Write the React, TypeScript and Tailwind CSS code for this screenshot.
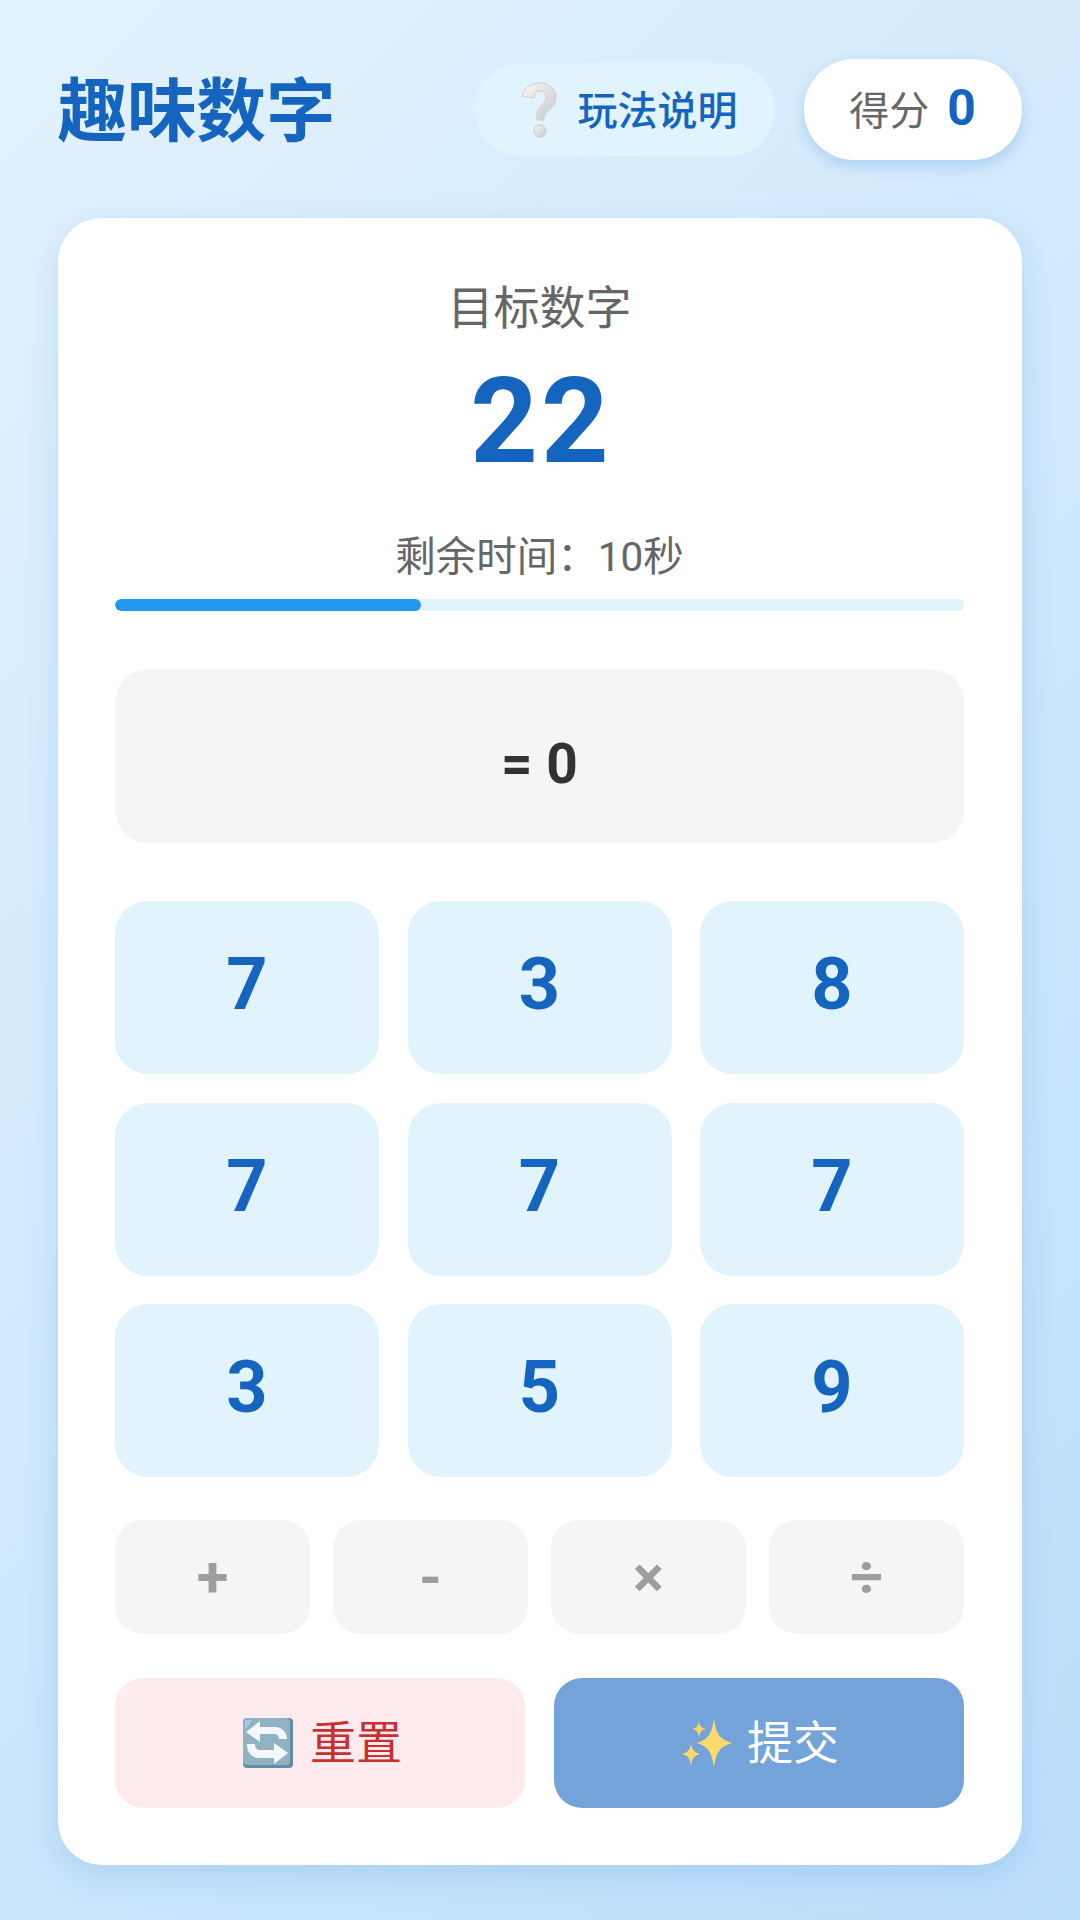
const font = { fontFamily: '"Roboto", "Noto Sans CJK SC", sans-serif' };

function QuestionIcon() {
  return (
    <svg width="38" height="56" viewBox="0 0 38 56" className="shrink-0">
      <defs>
        <linearGradient id="q" x1="0" y1="0" x2="1" y2="1">
          <stop offset="0" stopColor="#f7f7f7" />
          <stop offset="1" stopColor="#c9c9c9" />
        </linearGradient>
      </defs>
      <path
        d="M2 14C4 5 12 1 20 1c9 0 16 6 16 14 0 7-4 10-8 14-3 3-4 5-4 9h-7c-1-6 0-9 3-13 3-3 6-6 6-10 0-4-2-6-6-6-3 0-5 2-6 7Z"
        fill="url(#q)"
        stroke="#d0d0d0"
        strokeWidth="1"
      />
      <ellipse cx="20" cy="49" rx="6" ry="6" fill="url(#q)" stroke="#c4c4c4" strokeWidth="1" />
    </svg>
  );
}

function RepeatIcon() {
  return (
    <svg width="52" height="52" viewBox="0 0 52 52" className="shrink-0">
      <rect x="1" y="1" width="50" height="50" rx="4" fill="#5f8ea6" />
      <rect x="1" y="1" width="47" height="47" rx="4" fill="#90b3c4" />
      <path d="M3 3 H10 Q8 8 3 12 Z" fill="#a9c8e8" />
      <path
        d="M4 15 L18 4 V10 H33 C40 10 45 15 45 22 H37 C37 19 35 17 32 17 H18 V25 Z"
        fill="#f5f8fa"
      />
      <path
        d="M46 36 L32 47 V41 H17 C10 41 5 36 5 27 H13 C13 31 15 33 18 33 H32 V26 Z"
        fill="#f5f8fa"
      />
    </svg>
  );
}

function SparklesIcon() {
  return (
    <svg width="54" height="54" viewBox="0 0 54 54" className="shrink-0">
      <path d="M33 2 C35 18 39 24 52 27 C39 30 35 36 33 52 C31 36 27 30 15 27 C27 24 31 18 33 2Z" fill="#fdd96c" />
      <path d="M18 5 C19 10 20 12 25 13 C20 14 19 16 18 22 C17 16 16 14 11 13 C16 12 17 10 18 5Z" fill="#fbd35f" />
      <path d="M10 28 C11 34 13 36 19 38 C13 40 11 42 10 50 C9 42 7 40 1 38 C7 36 9 34 10 28Z" fill="#fdd96c" />
    </svg>
  );
}

const numbers = [7, 3, 8, 7, 7, 7, 3, 5, 9];
const operators = ['+', '-', '×', '÷'];

export default function App() {
  return (
    <div
      className="w-full h-[1920px] pl-[57.5px] pr-[58.5px] pt-[59px] bg-[linear-gradient(135deg,#e3f2fd_0%,#bbdefb_100%)] overflow-hidden"
      style={font}
    >
      {/* Header */}
      <header className="flex items-center justify-between h-[101px] mb-[58px]">
        <h1 className="pt-[7px] text-[69.5px] leading-none font-bold text-[#1565c0]">趣味数字</h1>
        <div className="flex items-center gap-[29px]">
          <button className="flex items-center justify-center gap-[20px] w-[300px] h-[93px] pl-[8px] rounded-full bg-[#e1f3fd] text-[40px] font-medium text-[#1565c0]">
            <QuestionIcon />
            <span className="pt-[4px]">玩法说明</span>
          </button>
          <div className="flex items-center justify-center gap-[18px] w-[218px] h-[101px] rounded-[50px] bg-white shadow-[0_6px_16px_rgba(21,101,192,0.2)]">
            <span className="pt-[4px] text-[40px] text-[#666666]">得分</span>
            <span className="text-[50px] font-bold leading-none text-[#1565c0] -translate-y-[2px]">0</span>
          </div>
        </div>
      </header>

      {/* Game card */}
      <main className="rounded-[44px] bg-white px-[57.5px] pt-[58px] pb-[57px] shadow-[0_10px_33px_rgba(21,101,192,0.15)]">
        <div className="text-center">
          <div className="pt-[2px] text-[46px] leading-[60px] text-[#666666]">目标数字</div>
          <div className="mt-[8px] pl-[3px] text-[118px] leading-[152px] font-bold tracking-[3px] text-[#1565c0]">22</div>
          <div className="mt-[31px] text-[40.5px] leading-[56px] text-[#666666]">剩余时间：10秒</div>
        </div>

        <div className="mt-[14px] h-[12px] rounded-full bg-[#e1f3fd] overflow-hidden">
          <div className="h-full w-[36%] rounded-full bg-[#2196f3]" />
        </div>

        <div className="mt-[58px] h-[174px] rounded-[33px] bg-[#f5f5f5] flex items-center justify-center pt-[16px] text-[55px] font-bold text-[#333333]">
          = 0
        </div>

        <div className="mt-[58px] grid grid-cols-3 gap-[28.5px]">
          {numbers.map((n, i) => (
            <button
              key={i}
              className="h-[173px] pb-[5px] rounded-[33px] bg-[#e1f3fd] text-[72px] font-bold text-[#1565c0]"
            >
              {n}
            </button>
          ))}
        </div>

        <div className="mt-[43px] grid grid-cols-4 gap-[23px]">
          {operators.map((op) => (
            <button
              key={op}
              className="h-[114px] rounded-[28px] bg-[#f5f5f5] text-[58px] font-bold text-[#9e9e9e]"
            >
              {op}
            </button>
          ))}
        </div>

        <div className="mt-[44px] grid grid-cols-2 gap-[29px]">
          <button className="h-[130px] pl-[4px] rounded-[28px] bg-[#ffebee] flex items-center justify-center gap-[16px] text-[46px] text-[#c92f2f]">
            <RepeatIcon />
            重置
          </button>
          <button className="h-[130px] pl-[2px] rounded-[28px] bg-[#73a3d8] flex items-center justify-center gap-[12px] text-[46px] text-white">
            <SparklesIcon />
            提交
          </button>
        </div>
      </main>
    </div>
  );
}
